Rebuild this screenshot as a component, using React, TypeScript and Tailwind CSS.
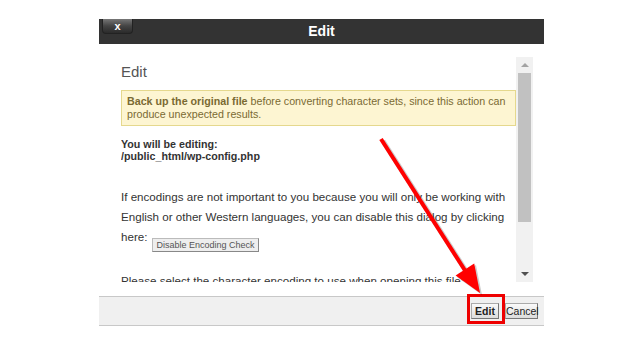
export default function App() {
  return (
    <div className="relative h-[346px] w-[644px] overflow-hidden bg-white pl-[99px] pt-[19px] font-['Liberation_Sans',Arial,sans-serif]">
      <div className="w-[445px]">
        {/* title bar */}
        <div className="relative flex h-[25px] items-center justify-center bg-[#333333]">
          <span className="text-[14px] font-bold text-white">Edit</span>
          <button className="absolute left-[3px] top-0 flex h-[15px] w-[31px] items-center justify-center rounded-b-[4px] border border-t-0 border-[#222] bg-gradient-to-b from-[#777] via-[#444] to-[#2b2b2b] text-[11px] font-bold leading-none text-white">
            x
          </button>
        </div>

        {/* body */}
        <div className="flex bg-white pb-[14px] pl-[22px] pr-[11px] pt-[13px]">
          <div className="h-[225px] w-[395px] overflow-hidden text-[#333]">
            <h2 className="mt-[5px] text-[15px] leading-[20px] text-[#555]">Edit</h2>
            <div className="mt-[8px] border border-[#e5d88d] bg-[#fdf5d2] px-[5px] py-[4px] text-[10.7px] leading-[13px] text-[#7a6a32]">
              <b>Back up the original file</b> before converting character sets, since this action can produce unexpected results.
            </div>
            <div className="mt-[12px] text-[10.7px] font-bold leading-[12px]">
              <p>You will be editing:</p>
              <p>/public_html/wp-config.php</p>
            </div>
            <p className="mt-[25px] text-[11.6px] leading-[19.5px]">
              If encodings are not important to you because you will only be working with English or other Western languages, you can disable this dialog by clicking
            </p>
            <div className="mt-[1px] flex items-start text-[11.6px]">
              <span className="leading-[19px]">here:</span>
              <button className="ml-[5px] mt-[11px] h-[14px] border border-[#bbb] border-b-[#888] border-r-[#888] bg-[#eeeeee] px-[3px] text-[9px] leading-[12px] text-[#555]">
                Disable Encoding Check
              </button>
            </div>
            <p className="mt-[19px] text-[11.6px] leading-[19px]">Please select the character encoding to use when opening this file:</p>
          </div>

          {/* scrollbar */}
          <div className="flex h-[225px] w-[17px] flex-col items-center bg-[#f1f1f1]">
            <div className="flex h-[16px] w-full items-center justify-center">
              <div className="h-0 w-0 border-x-[4px] border-b-[4px] border-x-transparent border-b-[#a3a3a3]" />
            </div>
            <div className="h-[149px] w-[13px] bg-[#c1c1c1]" />
            <div className="flex-1" />
            <div className="flex h-[16px] w-full items-center justify-center">
              <div className="h-0 w-0 border-x-[4px] border-t-[4px] border-x-transparent border-t-[#505050]" />
            </div>
          </div>
        </div>

        {/* footer */}
        <div className="flex h-[30px] items-start justify-end gap-[6px] border-y border-[#c8c8c8] bg-[#f0f0f0] pr-[6px] pt-[6px]">
          <button className="h-[16px] w-[28px] border border-[#aaa] border-b-[#777] border-r-[#777] bg-gradient-to-b from-[#fafafa] to-[#dcdcdc] px-0 text-[10.5px] font-bold leading-[14px] text-[#222]">
            Edit
          </button>
          <button className="h-[16px] w-[33px] border border-[#aaa] border-b-[#777] border-r-[#777] bg-gradient-to-b from-[#fafafa] to-[#dcdcdc] px-0 text-[10.5px] leading-[14px] text-[#222]">
            Cancel
          </button>
        </div>
      </div>

      {/* annotation: highlight box */}
      <div className="absolute left-[467px] top-[294px] h-[30px] w-[38px] border-[3px] border-[#ee0000]" />

      {/* annotation: arrow */}
      <svg className="pointer-events-none absolute left-0 top-0" width="644" height="346" viewBox="0 0 644 346">
        <line x1="383" y1="141" x2="468" y2="274" stroke="#000" strokeOpacity="0.2" strokeWidth="5" />
        <polygon points="482,295 457,277 476,265" fill="#000" fillOpacity="0.2" />
        <line x1="381" y1="139" x2="466" y2="272" stroke="#ff0000" strokeWidth="4" />
        <polygon points="480,293 455.6,275.4 474.2,263.4" fill="#ff0000" />
      </svg>
    </div>
  )
}
